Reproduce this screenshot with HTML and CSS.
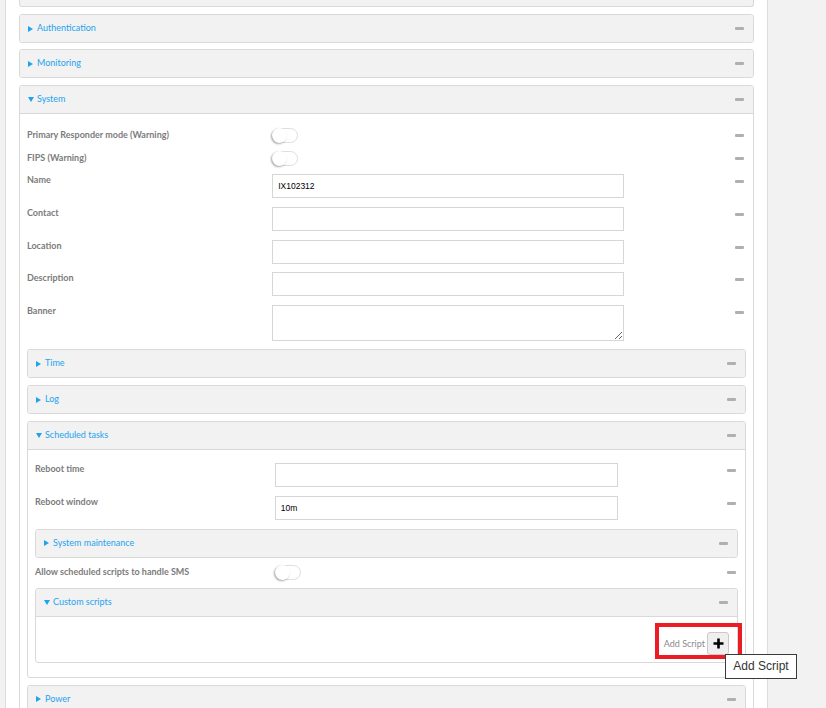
FILE: index.html
```html
<!DOCTYPE html>
<html>
<head>
<meta charset="utf-8">
<link rel="stylesheet" href="styles.css">
</head>
<body>
<div class="page">
  <div class="partial"></div>

  <div class="section">
    <div class="hdr"><span class="tri-r"></span><span class="title">Authentication</span><span class="minus"></span></div>
  </div>
  <div class="section wide-gap">
    <div class="hdr"><span class="tri-r"></span><span class="title">Monitoring</span><span class="minus"></span></div>
  </div>

  <div class="section open">
    <div class="hdr"><span class="tri-d"></span><span class="title">System</span><span class="minus"></span></div>
    <div class="body top">
      <div class="row t">
        <div class="label">Primary Responder mode (Warning)</div>
        <div class="ctrl"><span class="switch"><span class="knob"></span></span></div>
        <span class="minus"></span>
      </div>
      <div class="row t">
        <div class="label">FIPS (Warning)</div>
        <div class="ctrl"><span class="switch"><span class="knob"></span></span></div>
        <span class="minus"></span>
      </div>
      <div class="row i">
        <div class="label">Name</div>
        <div class="ctrl"><input class="text" type="text" value="IX102312"></div>
        <span class="minus"></span>
      </div>
      <div class="row i">
        <div class="label">Contact</div>
        <div class="ctrl"><input class="text" type="text"></div>
        <span class="minus"></span>
      </div>
      <div class="row i">
        <div class="label">Location</div>
        <div class="ctrl"><input class="text" type="text"></div>
        <span class="minus"></span>
      </div>
      <div class="row i">
        <div class="label">Description</div>
        <div class="ctrl"><input class="text" type="text"></div>
        <span class="minus"></span>
      </div>
      <div class="row a">
        <div class="label">Banner</div>
        <div class="ctrl"><textarea class="area"></textarea></div>
        <span class="minus"></span>
      </div>

      <div class="section">
        <div class="hdr"><span class="tri-r"></span><span class="title">Time</span><span class="minus"></span></div>
      </div>
      <div class="section">
        <div class="hdr"><span class="tri-r"></span><span class="title">Log</span><span class="minus"></span></div>
      </div>

      <div class="section open">
        <div class="hdr"><span class="tri-d"></span><span class="title">Scheduled tasks</span><span class="minus"></span></div>
        <div class="body">
          <div class="row i">
            <div class="label">Reboot time</div>
            <div class="ctrl"><input class="text" type="text"></div>
            <span class="minus"></span>
          </div>
          <div class="row i">
            <div class="label">Reboot window</div>
            <div class="ctrl"><input class="text" type="text" value="10m"></div>
            <span class="minus"></span>
          </div>
          <div class="section">
            <div class="hdr"><span class="tri-r"></span><span class="title">System maintenance</span><span class="minus"></span></div>
          </div>
          <div class="row t">
            <div class="label">Allow scheduled scripts to handle SMS</div>
            <div class="ctrl"><span class="switch"><span class="knob"></span></span></div>
            <span class="minus"></span>
          </div>
          <div class="section open last">
            <div class="hdr"><span class="tri-d"></span><span class="title">Custom scripts</span><span class="minus"></span></div>
            <div class="cbody">
              <span class="add-label">Add Script</span>
              <button class="add-btn" type="button"><svg width="11" height="11" viewBox="0 0 11 11"><path d="M5.5 0.5v10M0.5 5.5h10" stroke="#000" stroke-width="2.6" fill="none"/></svg></button>
              <div class="highlight"></div>
              <div class="tooltip">Add Script</div>
            </div>
          </div>
        </div>
      </div>

      <div class="section">
        <div class="hdr"><span class="tri-r"></span><span class="title">Power</span><span class="minus"></span></div>
      </div>
    </div>
  </div>
</div>
</body>
</html>
```
FILE: styles.css
```css
html, body {
  margin: 0;
  padding: 0;
}
body {
  background: #f2f2f2;
  font-family: Lato, "Liberation Sans", sans-serif;
  height: 708px;
  overflow: hidden;
}
.page {
  margin-left: 5px;
  width: 763px;
  box-sizing: border-box;
  min-height: 708px;
  background: #fff;
  border-left: 1px solid #dcdcdc;
  border-right: 1px solid #dcdcdc;
  padding: 0 13px;
}
.partial {
  height: 6px;
  border: 1px solid #d9d9d9;
  border-top: 0;
  border-radius: 0 0 3px 3px;
  background: #f2f2f2;
  margin-bottom: 7px;
}
.section {
  border: 1px solid #d9d9d9;
  border-radius: 3px;
  background: #fff;
  margin-bottom: 6px;
}
.section.wide-gap {
  margin-bottom: 7px;
}
.body > .section {
  margin-bottom: 7px;
}
.body > .section.last {
  margin-bottom: 0;
}
.hdr {
  display: flex;
  align-items: center;
  height: 27px;
  padding: 0 9px 0 8px;
  background: #f2f2f2;
  color: #1ea3ee;
  font-size: 9px;
  border-radius: 3px;
}
.hdr .title {
  margin-bottom: 2px;
}
.open > .hdr {
  border-bottom: 1px solid #d9d9d9;
  border-radius: 3px 3px 0 0;
}
.tri-r {
  width: 0;
  height: 0;
  border-left: 5px solid #1ea3ee;
  border-top: 3px solid transparent;
  border-bottom: 3px solid transparent;
  margin-right: 4px;
}
.tri-d {
  width: 0;
  height: 0;
  border-top: 5px solid #1ea3ee;
  border-left: 3px solid transparent;
  border-right: 3px solid transparent;
  margin-right: 3px;
}
.minus {
  display: block;
  width: 9px;
  height: 3px;
  background: #b0b0b0;
  border-radius: 1px;
  margin-left: auto;
}
.body {
  padding: 13px 7px 14px;
}
.body.top {
  padding-top: 14px;
}
.row {
  display: flex;
  align-items: flex-start;
}
.row .label {
  flex: 0 0 34.1%;
  font-size: 9px;
  font-weight: bold;
  color: #7c7c7c;
  line-height: 12px;
}
.row.t {
  height: 23px;
}
.row.t .label {
  line-height: 13px;
}
.row.i {
  height: 32.75px;
}
.row.a {
  height: 44px;
}
.ctrl {
  flex: 0 0 48.9%;
}
.row .minus {
  margin-top: 6px;
  margin-right: 2px;
}
.text {
  display: block;
  box-sizing: border-box;
  width: 100%;
  height: 24px;
  margin: 0;
  border: 1px solid #d6d6d6;
  border-radius: 0;
  padding: 0 5px;
  font-family: "Liberation Sans", sans-serif;
  font-size: 8.5px;
  color: #000;
  outline: none;
  background: #fff;
}
.area {
  display: block;
  box-sizing: border-box;
  width: 100%;
  height: 36px;
  margin: 0;
  border: 1px solid #d6d6d6;
  border-radius: 0;
  padding: 2px 5px;
  font-family: "Liberation Sans", sans-serif;
  font-size: 8px;
  outline: none;
  background: #fff;
}
.switch {
  display: block;
  position: relative;
  box-sizing: border-box;
  width: 26px;
  height: 15px;
  border: 1px solid #dedede;
  border-radius: 8px;
  background: #fff;
}
.knob {
  position: absolute;
  left: -1px;
  top: -1px;
  width: 15px;
  height: 15px;
  border-radius: 50%;
  background: #fff;
  box-shadow: -1px 1px 2px rgba(0, 0, 0, 0.35);
}
.cbody {
  position: relative;
  display: flex;
  justify-content: flex-end;
  align-items: center;
  box-sizing: border-box;
  height: 45px;
  padding: 15px 8px 7px;
}
.add-label {
  font-size: 9px;
  color: #8a8a8a;
  margin-right: 2px;
}
.add-btn {
  box-sizing: border-box;
  width: 22px;
  height: 23px;
  padding: 0;
  margin: 0;
  border: 1px solid #c9c9c9;
  border-radius: 3px;
  background: #efefef;
  display: flex;
  align-items: center;
  justify-content: center;
}
.add-btn svg {
  display: block;
}
.highlight {
  position: absolute;
  right: -5px;
  top: 6px;
  width: 87px;
  height: 36px;
  box-sizing: border-box;
  border: 4px solid #ec1c24;
}
.tooltip {
  position: absolute;
  left: 689px;
  top: 37px;
  width: 72px;
  height: 25px;
  box-sizing: border-box;
  border: 1px solid #3a3a3a;
  background: #fff;
  font-family: "Liberation Sans", sans-serif;
  font-size: 12px;
  color: #333;
  line-height: 23px;
  text-align: center;
  white-space: nowrap;
}
```
